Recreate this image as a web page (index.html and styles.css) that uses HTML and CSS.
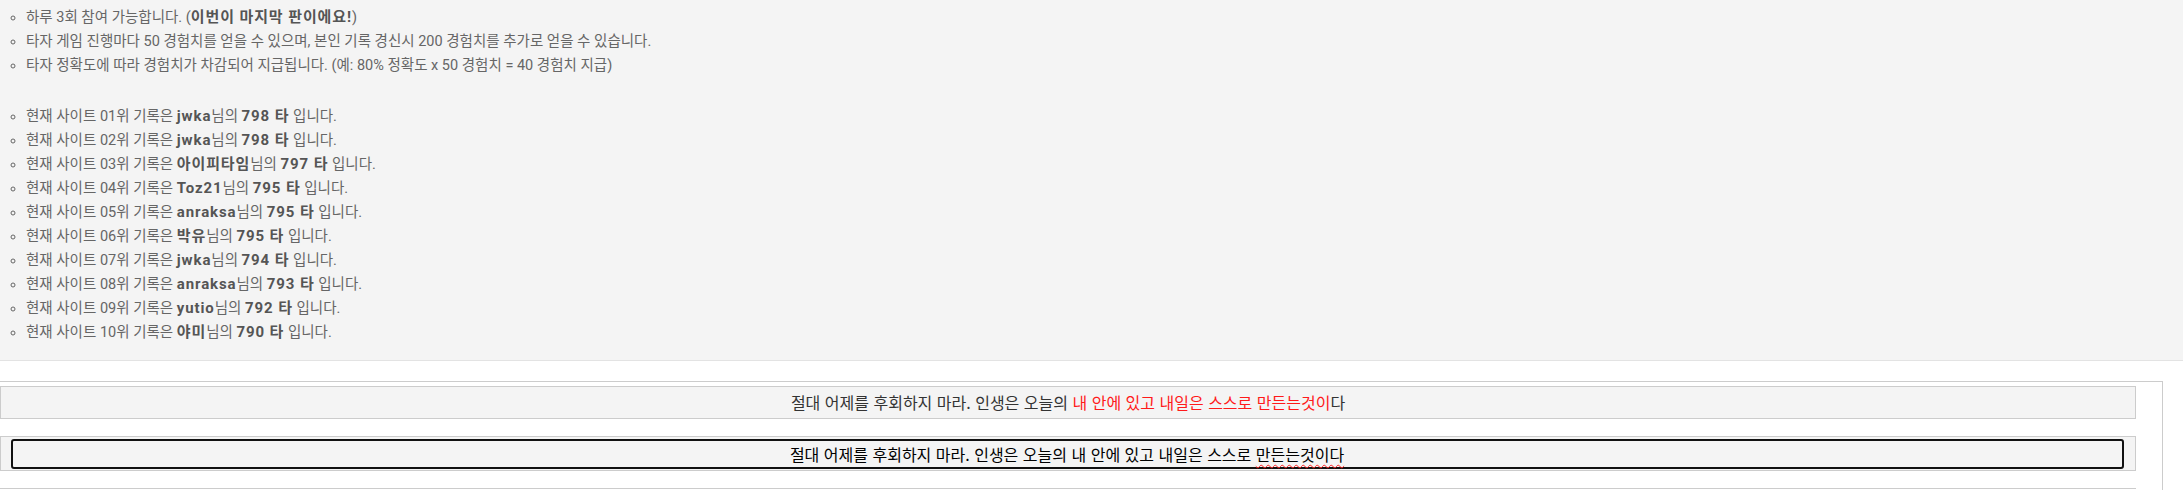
FILE: index.html
```html
<!DOCTYPE html>
<html lang="ko">
<head>
  <meta charset="UTF-8">
  <meta name="viewport" content="width=device-width, initial-scale=1.0">
  <title>타자 게임</title>
  <link rel="stylesheet" href="styles.css">
</head>
<body>
<!-- 안내 및 순위 -->
<div class="notice">
  <ul class="rules">
    <li>하루 3회 참여 가능합니다. (<b>이번이 마지막 판이에요!</b>)</li>
    <li>타자 게임 진행마다 50 경험치를 얻을 수 있으며, 본인 기록 경신시 200 경험치를 추가로 얻을 수 있습니다.</li>
    <li>타자 정확도에 따라 경험치가 차감되어 지급됩니다. (예: 80% 정확도 x 50 경험치 = 40 경험치 지급)</li>
  </ul>
  <ul class="ranks">
    <li>현재 사이트 01위 기록은 <b>jwka</b>님의 <b>798 타</b> 입니다.</li>
    <li>현재 사이트 02위 기록은 <b>jwka</b>님의 <b>798 타</b> 입니다.</li>
    <li>현재 사이트 03위 기록은 <b>아이피타임</b>님의 <b>797 타</b> 입니다.</li>
    <li>현재 사이트 04위 기록은 <b>Toz21</b>님의 <b>795 타</b> 입니다.</li>
    <li>현재 사이트 05위 기록은 <b>anraksa</b>님의 <b>795 타</b> 입니다.</li>
    <li>현재 사이트 06위 기록은 <b>박유</b>님의 <b>795 타</b> 입니다.</li>
    <li>현재 사이트 07위 기록은 <b>jwka</b>님의 <b>794 타</b> 입니다.</li>
    <li>현재 사이트 08위 기록은 <b>anraksa</b>님의 <b>793 타</b> 입니다.</li>
    <li>현재 사이트 09위 기록은 <b>yutio</b>님의 <b>792 타</b> 입니다.</li>
    <li>현재 사이트 10위 기록은 <b>야미</b>님의 <b>790 타</b> 입니다.</li>
  </ul>
</div>

<!-- 타자 입력 -->
<div class="game">
  <div class="sentence">절대 어제를 후회하지 마라. 인생은 오늘의 <span class="wrong">내 안에 있고 내일은 스스로 만든는것이</span>다</div>
  <div class="typing">
    <div class="typing-field">절대 어제를 후회하지 마라. 인생은 오늘의 내 안에 있고 내일은 스스로 <span class="typo">만든는것이다</span></div>
  </div>
  <div class="next"></div>
</div>
</body>
</html>
```

FILE: styles.css
```css
body {
  margin: 0;
  background-color: #fff;
  font-family: Roboto, "Noto Sans CJK KR", sans-serif;
}

.notice {
  background-color: #f4f4f4;
  border-bottom: 1px solid #e3e3e3;
  padding: 6px 0 15px;
  color: #666;
  font-size: 14.5px;
  line-height: 24px;
}

.notice ul {
  margin: 0;
  padding-left: 26px;
  list-style: circle;
}

.notice li {
  height: 24px;
}

.notice b {
  color: #555;
  font-size: 15px;
  line-height: 1;
  letter-spacing: 0.9px;
}

.rules {
  margin-bottom: 27px !important;
}

.game {
  margin-top: 20px;
  border: 1px solid #ccc;
  border-left: 0;
  border-bottom: 0;
  width: 2162px;
  padding-top: 4px;
  font-family: "Noto Sans CJK KR", sans-serif;
  font-size: 16px;
}

.sentence {
  width: 2134px;
  height: 31px;
  line-height: 31px;
  border: 1px solid #ccc;
  background-color: #f4f4f4;
  text-align: center;
  color: #333;
}

.wrong {
  color: #ff1a1a;
}

.typing {
  margin-top: 17px;
  width: 2136px;
  height: 35px;
  box-sizing: border-box;
  border: 1px solid #ccc;
  background-color: #f4f4f4;
  padding: 2px 11px 1px 10px;
}

.typing-field {
  height: 100%;
  box-sizing: border-box;
  border: 2px solid #111;
  border-radius: 3px;
  text-align: center;
  line-height: 26px;
  color: #000;
  padding-right: 1px;
}

.typo {
  text-decoration: underline wavy #f22;
  text-decoration-thickness: 1px;
  text-underline-offset: 3px;
}

.next {
  margin-top: 17px;
  width: 2136px;
  height: 10px;
  border-top: 1px solid #ccc;
}
```
